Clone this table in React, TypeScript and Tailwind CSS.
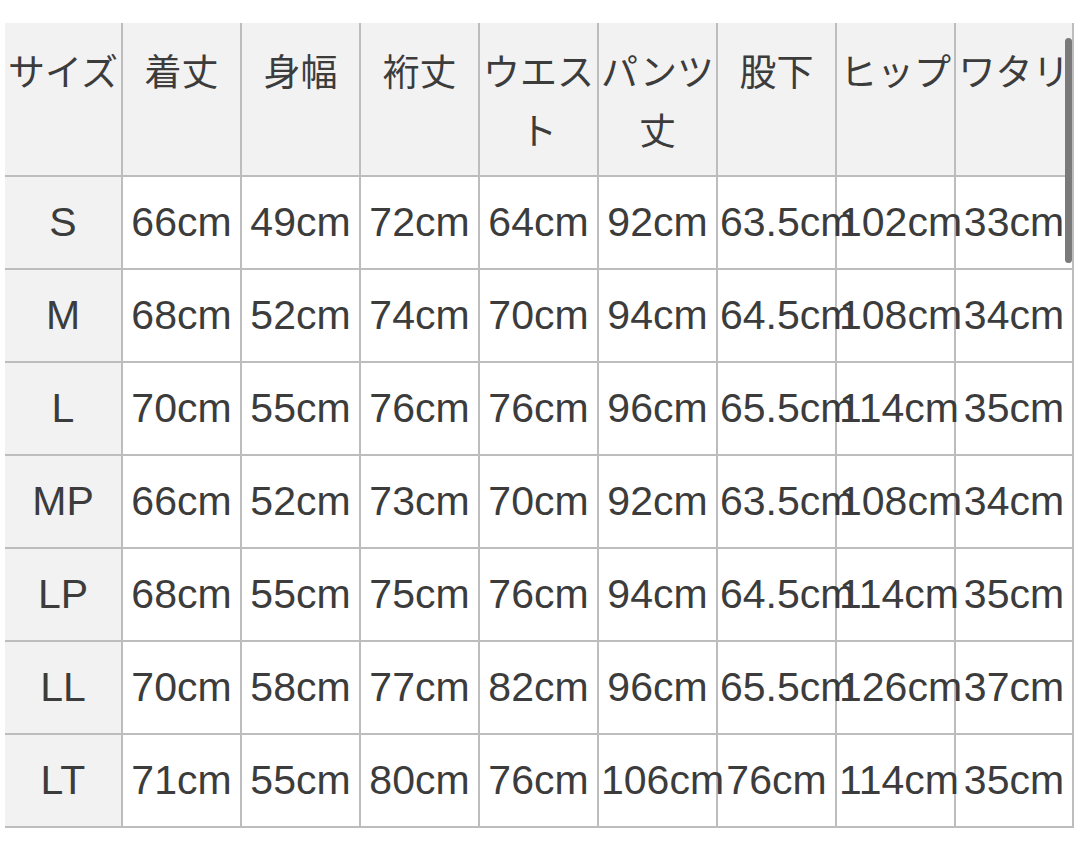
import React from 'react';

const headers = ['サイズ', '着丈', '身幅', '裄丈', 'ウエスト', 'パンツ丈', '股下', 'ヒップ', 'ワタリ'];

const rows = [
  ['S', '66cm', '49cm', '72cm', '64cm', '92cm', '63.5cm', '102cm', '33cm'],
  ['M', '68cm', '52cm', '74cm', '70cm', '94cm', '64.5cm', '108cm', '34cm'],
  ['L', '70cm', '55cm', '76cm', '76cm', '96cm', '65.5cm', '114cm', '35cm'],
  ['MP', '66cm', '52cm', '73cm', '70cm', '92cm', '63.5cm', '108cm', '34cm'],
  ['LP', '68cm', '55cm', '75cm', '76cm', '94cm', '64.5cm', '114cm', '35cm'],
  ['LL', '70cm', '58cm', '77cm', '82cm', '96cm', '65.5cm', '126cm', '37cm'],
  ['LT', '71cm', '55cm', '80cm', '76cm', '106cm', '76cm', '114cm', '35cm'],
];

const colWidths = ['w-[117px]', 'w-[119px]', 'w-[119px]', 'w-[119px]', 'w-[119px]', 'w-[119px]', 'w-[119px]', 'w-[119px]', 'w-[118px]'];

export default function App() {
  return (
    <div
      className="w-[1080px] h-[868px] bg-white pt-[23px] pl-[5px]"
      style={{ fontFamily: '"Liberation Sans", "Noto Sans CJK JP", sans-serif' }}
    >
      <div className="relative w-[1070px]">
        <table className="table-fixed w-[1068px] border-collapse text-[#3c3c3c]">
          <colgroup>
            {colWidths.map((w, i) => (
              <col key={i} className={w} />
            ))}
          </colgroup>
          <thead>
            <tr className="h-[153px] bg-[#f2f2f2]">
              {headers.map((h, i) => (
                <th
                  key={h}
                  className={`align-top font-normal text-[37px] leading-[59px] pt-[21px] px-[2px] border-[#bdbdbd] border-b-2 border-r-2 ${
                    i === 0 ? 'text-left pl-[3px] pr-0' : 'text-center'
                  }`}
                >
                  {h}
                </th>
              ))}
            </tr>
          </thead>
          <tbody>
            {rows.map((r) => (
              <tr key={r[0]} className="h-[93px]">
                {r.map((c, i) => (
                  <td
                    key={i}
                    className={`text-center align-middle text-[41px] whitespace-nowrap px-[2px] border-[#bdbdbd] border-b-2 border-r-2 ${
                      i === 0 ? 'bg-[#f2f2f2]' : 'bg-white'
                    }`}
                  >
                    {c}
                  </td>
                ))}
              </tr>
            ))}
          </tbody>
        </table>
        <div className="absolute left-[1060px] top-[15px] w-[7px] h-[225px] rounded-full bg-[#7a7a7a]" />
      </div>
    </div>
  );
}
